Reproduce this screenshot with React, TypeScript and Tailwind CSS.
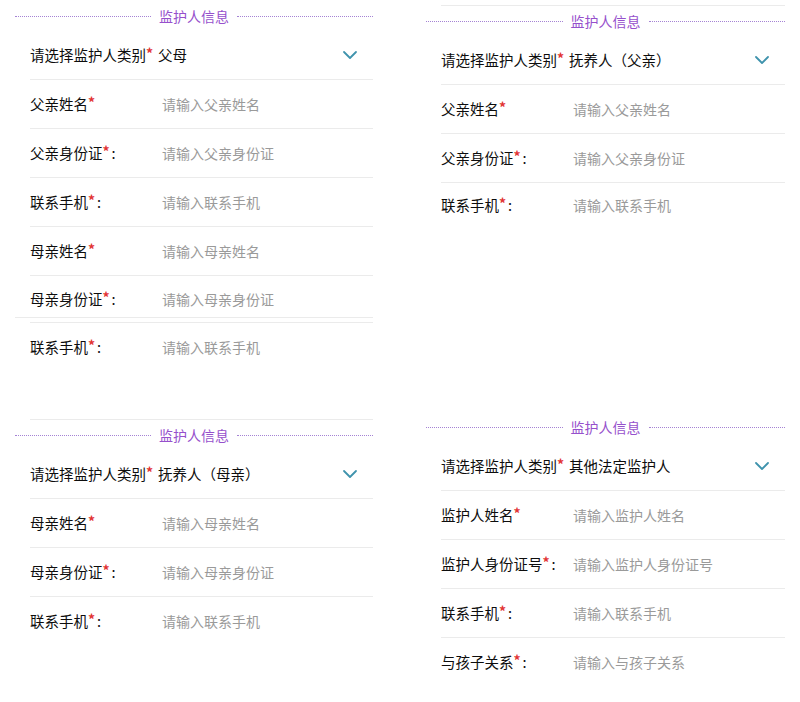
import { ChevronDown } from "lucide-react";

type Field = { label: string; colon?: boolean; placeholder: string };

const font = { fontFamily: '"Noto Sans CJK SC", "Noto Sans", sans-serif' };

function Header() {
  return (
    <div className="h-[30px] flex items-center">
      <div className="flex-1 border-t border-dotted border-[#a583d4]" />
      <span className="px-2 text-[14px] leading-[22px] text-[#9650cc]">监护人信息</span>
      <div className="flex-1 border-t border-dotted border-[#a583d4]" />
    </div>
  );
}

function Star() {
  return <span className="text-[#e23434] text-[14px] font-bold relative -top-[2px]">*</span>;
}

function SelectRow({ value }: { value: string }) {
  return (
    <div className="ml-[15px] h-[49px] border-b border-[#ebebeb] flex items-center justify-between pr-[11px]">
      <div className="flex items-center text-[14.5px] leading-[22px] text-[#0d0d0d]">
        <span>请选择监护人类别</span>
        <Star />
        <span className="ml-[5px]">{value}</span>
      </div>
      <ChevronDown size={24} strokeWidth={1.8} className="text-[#3f93ad]" />
    </div>
  );
}

function Label({ f }: { f: Field }) {
  return (
    <div className="w-[132px] shrink-0 text-[14.5px] text-[#0d0d0d]">
      {f.label}
      <Star />
      {f.colon && <span className="ml-[2px]">:</span>}
    </div>
  );
}

function InputRow({ f, border = true }: { f: Field; border?: boolean }) {
  return (
    <div
      className={`ml-[15px] flex items-center leading-[22px] ${
        border ? "h-[49px] border-b border-[#ebebeb]" : "h-[48px]"
      }`}
    >
      <Label f={f} />
      <span className="text-[14px] text-[#9a9a9a]">{f.placeholder}</span>
    </div>
  );
}

const fatherName: Field = { label: "父亲姓名", placeholder: "请输入父亲姓名" };
const fatherId: Field = { label: "父亲身份证", colon: true, placeholder: "请输入父亲身份证" };
const phone: Field = { label: "联系手机", colon: true, placeholder: "请输入联系手机" };
const motherName: Field = { label: "母亲姓名", placeholder: "请输入母亲姓名" };
const motherId: Field = { label: "母亲身份证", colon: true, placeholder: "请输入母亲身份证" };

export default function App() {
  return (
    <div className="w-[800px] h-[702px] bg-white flex overflow-hidden" style={font}>
      {/* left column */}
      <div className="w-[400px] pl-[15px] pr-[27px] pt-[1px] flex flex-col">
        <Header />
        <SelectRow value="父母" />
        <InputRow f={fatherName} />
        <InputRow f={fatherId} />
        <InputRow f={phone} />
        <InputRow f={motherName} />
        <div className="ml-[15px] h-[41px] flex items-start pt-[12px] leading-[22px]">
          <Label f={motherId} />
          <span className="text-[14px] text-[#9a9a9a]">{motherId.placeholder}</span>
        </div>
        <div className="h-px bg-[#ebebeb]" />
        <div className="h-[4px]" />
        <div className="ml-[15px] h-px bg-[#ebebeb]" />
        <InputRow f={phone} border={false} />
        <div className="h-[48px]" />
        <div className="ml-[15px] h-px bg-[#ebebeb]" />
        <Header />
        <SelectRow value="抚养人（母亲）" />
        <InputRow f={motherName} />
        <InputRow f={motherId} />
        <InputRow f={phone} border={false} />
      </div>

      {/* right column */}
      <div className="w-[400px] pl-[26px] pr-[15px] pt-[5px] flex flex-col">
        <div className="ml-[15px] h-px bg-[#ebebeb]" />
        <Header />
        <SelectRow value="抚养人（父亲）" />
        <InputRow f={fatherName} />
        <InputRow f={fatherId} />
        <div className="-mt-[2px]">
          <InputRow f={phone} border={false} />
        </div>
        <div className="h-[183px]" />
        <Header />
        <SelectRow value="其他法定监护人" />
        <InputRow f={{ label: "监护人姓名", placeholder: "请输入监护人姓名" }} />
        <InputRow f={{ label: "监护人身份证号", colon: true, placeholder: "请输入监护人身份证号" }} />
        <InputRow f={phone} />
        <InputRow f={{ label: "与孩子关系", colon: true, placeholder: "请输入与孩子关系" }} border={false} />
      </div>
    </div>
  );
}
